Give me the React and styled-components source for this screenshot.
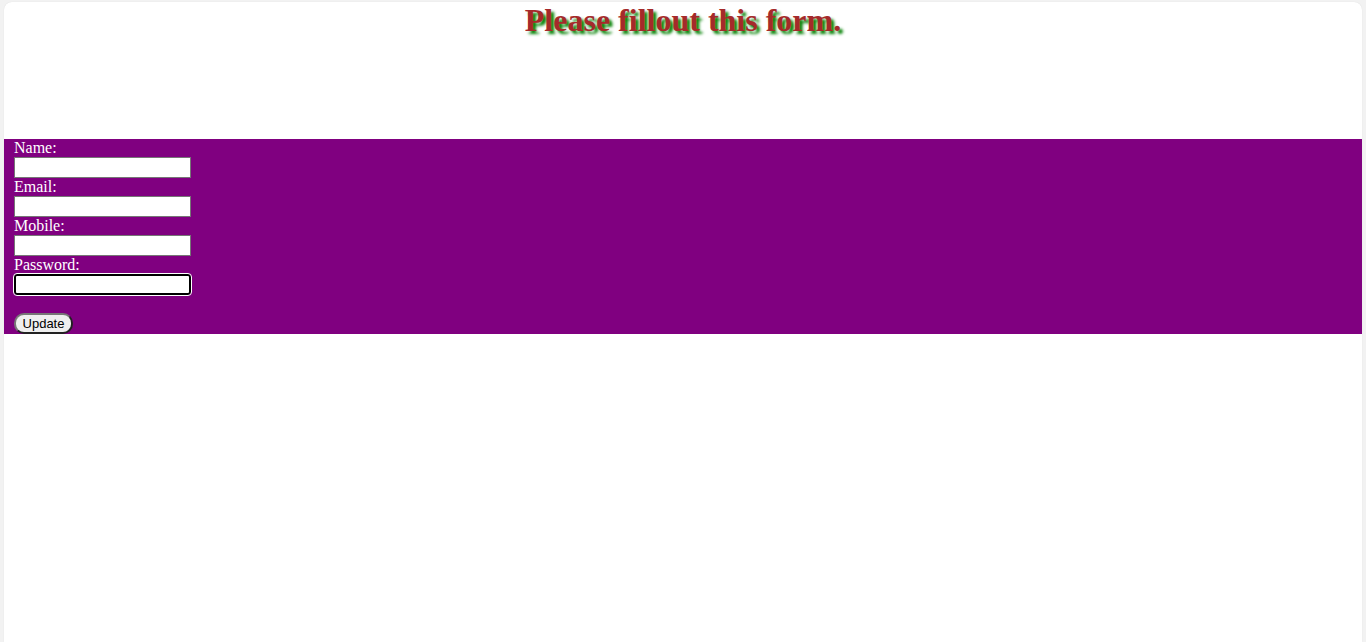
import React from "react"
import styled, { createGlobalStyle } from "styled-components"

const GlobalStyle = createGlobalStyle`
  html, body {
    margin: 0;
    padding: 0;
    background: #f2f2f2;
  }
`

const Frame = styled.div`
  margin: 2px 4px 0 4px;
  min-height: 640px;
  background: #ffffff;
  border-radius: 8px 8px 0 0;
  box-shadow: 0 0 1px rgba(0, 0, 0, 0.12);
  overflow: hidden;
`

const Header = styled.header`
  height: 137px;
`

const Title = styled.h1`
  margin: 0;
  text-align: center;
  font-family: "Liberation Serif", "Times New Roman", serif;
  font-weight: bold;
  font-size: 32px;
  line-height: 37px;
  color: #a52a2a;
  text-shadow: 3px 3px 3px #008000;
`

const FormBand = styled.form`
  background: #800080;
  padding: 0 10px 0;
  font-family: "Liberation Serif", "Times New Roman", serif;
  font-size: 16px;
  color: #ffffff;
`

const Label = styled.label`
  display: block;
  line-height: 18px;
  height: 18px;
`

const Input = styled.input`
  display: block;
  box-sizing: border-box;
  width: 177px;
  height: 21px;
  margin: 0;
  padding: 1px 2px;
  background: #ffffff;
  font-family: "Liberation Sans", Arial, sans-serif;
  font-size: 13px;
  border: ${(p) => (p.$focused ? "2px solid #000" : "1px solid #767676")};
  border-radius: ${(p) => (p.$focused ? "3px" : "0")};
  outline: ${(p) => (p.$focused ? "1px solid #fff" : "none")};
`

const Spacer = styled.div`
  height: 18px;
`

const Button = styled.button`
  display: block;
  box-sizing: border-box;
  width: 59px;
  height: 21px;
  padding: 0 6px;
  margin: 0;
  font-family: "Liberation Sans", Arial, sans-serif;
  font-size: 13px;
  color: #000;
  background: #efefef;
  border: 2px solid;
  border-color: #767676 #222 #222 #767676;
  border-radius: 10px;
`

const fields = [
  { label: "Name:", type: "text" },
  { label: "Email:", type: "email" },
  { label: "Mobile:", type: "tel" },
  { label: "Password:", type: "password", focused: true },
]

export default function App() {
  return (
    <>
      <GlobalStyle />
      <Frame>
        <Header>
          <Title>Please fillout this form.</Title>
        </Header>
        <FormBand onSubmit={(e) => e.preventDefault()}>
          {fields.map((f) => (
            <React.Fragment key={f.label}>
              <Label>{f.label}</Label>
              <Input type={f.type} $focused={f.focused} />
            </React.Fragment>
          ))}
          <Spacer />
          <Button type="submit">Update</Button>
        </FormBand>
      </Frame>
    </>
  )
}
